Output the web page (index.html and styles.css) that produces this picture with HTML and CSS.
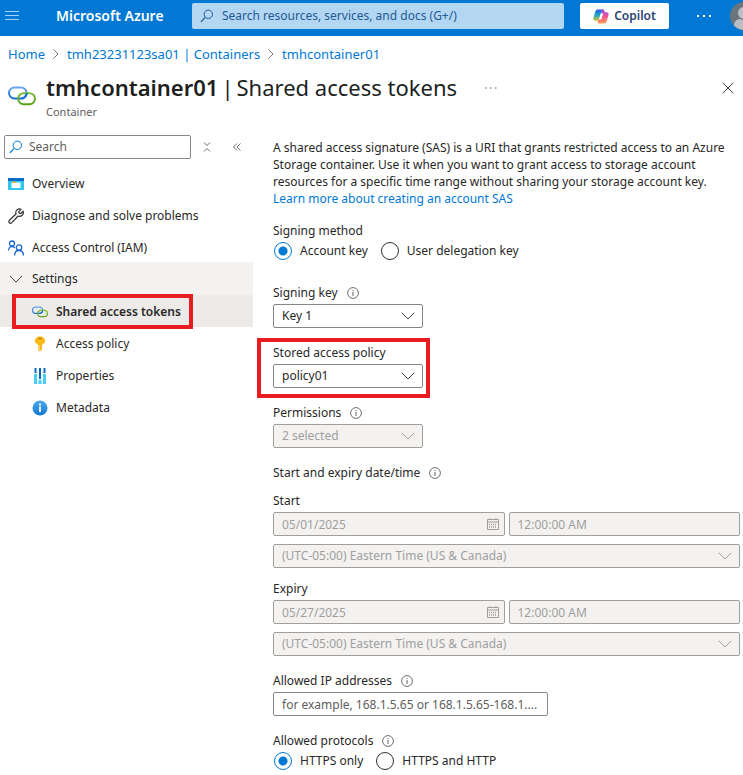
FILE: index.html
```html
<!DOCTYPE html>
<html lang="en">
<head>
<meta charset="utf-8">
<title>tmhcontainer01 | Shared access tokens</title>
<link rel="stylesheet" href="styles.css">
</head>
<body>
<svg class="defs" aria-hidden="true">
  <defs>
    <linearGradient id="g-blue" x1="0" y1="0" x2="0" y2="1"><stop offset="0" stop-color="#6aa5f3"/><stop offset="1" stop-color="#0f6fd0"/></linearGradient>
    <linearGradient id="g-green" x1="0" y1="0" x2="0" y2="1"><stop offset="0" stop-color="#7fbf3a"/><stop offset="1" stop-color="#5a9e17"/></linearGradient>
    <linearGradient id="g-info" x1="0" y1="0" x2="0" y2="1"><stop offset="0" stop-color="#4aa8ec"/><stop offset="1" stop-color="#1277cf"/></linearGradient>
    <linearGradient id="g-cool" x1="0" y1="0" x2="0" y2="1"><stop offset="0" stop-color="#1b62e0"/><stop offset=".5" stop-color="#1ba6c9"/><stop offset="1" stop-color="#d9c62c"/></linearGradient>
    <linearGradient id="g-warm" x1="0" y1="0" x2="0" y2="1"><stop offset="0" stop-color="#9a50e8"/><stop offset=".5" stop-color="#f0568f"/><stop offset="1" stop-color="#ff9a4d"/></linearGradient>
  </defs>
  <symbol id="link" viewBox="0 0 28 20">
    <rect x="1" y="1.500" width="17.600" height="11" rx="5.500" fill="none" stroke="url(#g-blue)" stroke-width="2"/>
    <rect x="10.200" y="7.200" width="16.800" height="11" rx="5.500" fill="none" stroke="url(#g-green)" stroke-width="2"/>
    <path d="M13 12.500a5.500 5.500 0 0 0 5.600-5.500" fill="none" stroke="#1873d3" stroke-width="2"/>
  </symbol>
  <symbol id="lens" viewBox="0 0 14 14">
    <circle cx="8.3" cy="5.3" r="4.2" fill="none" stroke="currentColor"/>
    <path d="M5.2 8.4 1 12.8" stroke="currentColor" stroke-width="1.2"/>
  </symbol>
  <symbol id="chevron" viewBox="0 0 14 8">
    <path d="m.8.8 6.2 6.2L13.200.8" fill="none" stroke="currentColor"/>
  </symbol>
  <symbol id="info" viewBox="0 0 12 12">
    <circle cx="6" cy="6" r="5.400" fill="none" stroke="currentColor" stroke-width=".9"/>
    <path d="M6 5v4M6 3v1.100" stroke="currentColor"/>
  </symbol>
  <symbol id="calendar" viewBox="0 0 12 12">
    <path d="M.5 1.500h11v10H.5zM.5 4h11M3 0v2M9 0v2" fill="none" stroke="currentColor"/>
    <path d="M2 6.500h8M2 9h7" stroke="currentColor" stroke-width="1.500" stroke-dasharray="1 1"/>
  </symbol>
</svg>

<header class="topbar">
  <div class="topbar-start">
    <button class="icon-button" type="button" aria-label="Show portal menu">
      <svg width="14" height="10" viewBox="0 0 14 10"><path d="M0 .5h14M0 4.500h14M0 8.500h14" stroke="#a8d0f2"/></svg>
    </button>
    <a class="brand" href="#">Microsoft Azure</a>
  </div>
  <div class="global-search">
    <svg width="14" height="14"><use href="#lens"/></svg>
    <input type="search" aria-label="Search resources, services, and docs" placeholder="Search resources, services, and docs (G+/)">
  </div>
  <button class="copilot" type="button">
    <svg width="16" height="15" viewBox="0 0 16 15">
      <path d="M5 .5h4.500c1.200 0 1.500.5 1.800 1.500L11.600 3H9.500c-1 0-1.400.6-1.700 1.500L6 10.300C5.700 11.200 5.200 11.700 4 11.700H2.200C.6 11.700 0 10.500.4 9l1.800-6C2.700 1.300 3.500.5 5 .5z" fill="url(#g-cool)"/>
      <path d="M9.500.5c1.200 0 1.500.5 1.800 1.500l.4 1.300h1.800c1.600 0 2.400 1.200 2 2.700l-1.800 6c-.5 1.700-1.300 2.500-2.800 2.500H6.500c-1.200 0-1.500-.5-1.800-1.500L4.400 11.700c1.100-.1 1.400-.7 1.700-1.500h2.100L10 4.700 8 4c.4-1.500 0-3.500 1.500-3.500z" fill="url(#g-warm)"/>
      <path d="M7.800 4.800h2.200L8.200 10.200H6.100z" fill="#fff"/>
    </svg>
    Copilot
  </button>
  <button class="icon-button more" type="button" aria-label="More">
    <svg width="14" height="2"><path d="M0 1h2M6 1h2M12 1h2" stroke="#fff" stroke-width="2"/></svg>
  </button>
  <svg class="avatar" width="28" height="28" viewBox="0 0 28 28"><circle cx="14" cy="14" r="14" fill="#6b757d"/><circle cx="14" cy="11" r="6" fill="#b9bfc4"/><path d="M4 23.500c0-4 3-6.500 6-6.500 2 1.300 6 1.300 8 0 3 0 6 2.500 6 6.500A14 14 0 0 1 14 28a14 14 0 0 1-10-4.500z" fill="#b9bfc4"/></svg>
</header>

<nav class="breadcrumb" aria-label="Breadcrumb">
  <a href="#">Home</a>
  <svg width="6" height="10" viewBox="0 0 6 10"><path d="m.5.5 4.500 4.500L.5 9.500" fill="none" stroke="#797775"/></svg>
  <a href="#">tmh23231123sa01 | Containers</a>
  <svg width="6" height="10" viewBox="0 0 6 10"><path d="m.5.5 4.500 4.500L.5 9.500" fill="none" stroke="#797775"/></svg>
  <a href="#">tmhcontainer01</a>
</nav>

<div class="page-head">
  <svg width="28" height="20"><use href="#link"/></svg>
  <div class="page-title">
    <h1><b>tmhcontainer01</b> <span>|</span> <span>Shared access tokens</span></h1>
    <p>Container</p>
  </div>
  <button class="icon-button title-more" type="button" aria-label="More options">
    <svg width="12" height="2"><path d="M0 1h1.500M5 1h1.500M10 1h1.500" stroke="#605e5c"/></svg>
  </button>
  <button class="icon-button close" type="button" aria-label="Close">
    <svg width="12" height="12"><path d="m.5.5 11 11m0-11-11 11" stroke="#484644"/></svg>
  </button>
</div>

<div class="body">
  <aside class="sidebar">
    <div class="menu-tools">
      <div class="menu-search">
        <svg width="14" height="14"><use href="#lens"/></svg>
        <input type="search" aria-label="Search menu" placeholder="Search">
      </div>
      <button class="icon-button" type="button" aria-label="Collapse groups"><svg width="8" height="10" viewBox="0 0 8 10"><path d="m1 .5 3 3 3-3M1 9.500l3-3 3 3" fill="none" stroke="#605e5c" stroke-width=".9"/></svg></button>
      <button class="icon-button" type="button" aria-label="Collapse menu"><svg width="8" height="8" viewBox="0 0 8 8"><path d="M4 .5.500 4 4 7.500M7.500.5 4 4l3.500 3.500" fill="none" stroke="#605e5c" stroke-width=".9"/></svg></button>
    </div>
    <ul class="menu">
      <li><a href="#">
        <svg width="16" height="16" viewBox="0 0 16 16"><path d="M0 2h16v12H0z" fill="#32c8ee"/><path d="M0 2h16v3H0z" fill="#0b6dc7"/><path d="M3.500 6.500h9V12h-9z" fill="#fff"/><path d="M4 5.500h4v1.400H4z" fill="#f7a53b"/></svg>
        Overview</a></li>
      <li><a href="#">
        <svg width="16" height="16" viewBox="0 0 16 16"><path d="M13.200 1.200 10.800 3.600l.3 1.600 1.700.3 2.300-2.400c.9 2.400-.7 5.100-3.400 5.200-.6 0-1.100-.1-1.600-.3l-6.300 6.600c-1.700 1.700-4-.5-2.400-2.300L8 6C6.900 2.700 10 -.2 13.200 1.200z" fill="none" stroke="#323130" stroke-width="1.200" stroke-linejoin="round"/></svg>
        Diagnose and solve problems</a></li>
      <li><a href="#">
        <svg width="16" height="16" viewBox="0 0 16 16" fill="none" stroke="#1a66d0" stroke-width="1.300"><circle cx="4" cy="3.500" r="2.500"/><path d="M.6 10.500c0-2.300 1.500-4 3.400-4 1.200 0 2.200.5 2.800 1.400"/><circle cx="11" cy="7.500" r="2.700"/><path d="M6.600 15.500c0-3 1.900-5 4.400-5s4.400 2 4.400 5"/></svg>
        Access Control (IAM)</a></li>
      <li class="group">
        <button type="button" aria-expanded="true"><svg width="16" height="8" viewBox="-1 0 16 8"><path d="m1 1 6 6 6-6" fill="none" stroke="#484644"/></svg>
        Settings</button>
        <ul>
          <li class="marked"><a class="current" href="#" aria-current="page">
            <svg width="16" height="12"><use href="#link"/></svg>
            Shared access tokens</a></li>
          <li><a href="#">
            <svg width="16" height="16" viewBox="0 0 16 16"><path d="M6 .5h4L13 3.200v3L10 9V13l-2 2.500L6.200 14V9L3 6.200v-3z" fill="#fdb813"/><path d="M6 2.500h4" stroke="#b97b00"/><path d="M7.300 9v5" stroke="#ffdf7c"/></svg>
            Access policy</a></li>
          <li><a href="#">
            <svg width="16" height="16" viewBox="0 0 16 16"><path d="M3.500 0v5M8 0v11M12.500 0v5" stroke="#0b69c7" stroke-width="2"/><path d="M3.500 6v10M8 12v4M12.500 6v10" stroke="#42d1f5" stroke-width="3"/></svg>
            Properties</a></li>
          <li><a href="#">
            <svg width="16" height="16" viewBox="0 0 16 16"><circle cx="8" cy="8" r="7.500" fill="url(#g-info)"/><path d="M8 6.500V12M8 3.500v2" stroke="#fff" stroke-width="1.800"/></svg>
            Metadata</a></li>
        </ul>
      </li>
    </ul>
  </aside>

  <main class="content">
    <p class="intro">A shared access signature (SAS) is a URI that grants restricted access to an Azure Storage container. Use it when you want to grant access to storage account resources for a specific time range without sharing your storage account key.<br><a href="#">Learn more about creating an account SAS</a></p>

    <form class="form">
      <fieldset class="field radios-field">
        <legend class="label">Signing method</legend>
        <div class="radios">
          <label><input type="radio" name="method" checked>Account key</label>
          <label><input type="radio" name="method">User delegation key</label>
        </div>
      </fieldset>

      <div class="field">
        <div class="label"><label for="key">Signing key</label><svg width="12" height="12"><use href="#info"/></svg></div>
        <div class="select short"><select id="key"><option>Key 1</option><option>Key 2</option></select><svg width="14" height="8"><use href="#chevron"/></svg></div>
      </div>

      <div class="field">
        <div class="highlight">
          <div class="label"><label for="policy">Stored access policy</label></div>
          <div class="select short"><select id="policy"><option>policy01</option></select><svg width="14" height="8"><use href="#chevron"/></svg></div>
        </div>
      </div>

      <div class="field">
        <div class="label"><label for="perm">Permissions</label><svg width="12" height="12"><use href="#info"/></svg></div>
        <div class="select short"><select id="perm" disabled><option>2 selected</option></select><svg width="14" height="8"><use href="#chevron"/></svg></div>
      </div>

      <fieldset class="field dates">
        <legend class="label">Start and expiry date/time<svg width="12" height="12"><use href="#info"/></svg></legend>
        <div class="date">
          <div class="label"><label for="start">Start</label></div>
          <div class="date-row">
            <div class="date-box"><input id="start" type="text" value="05/01/2025" disabled><svg width="12" height="12"><use href="#calendar"/></svg></div>
            <input type="text" aria-label="Start time" value="12:00:00 AM" disabled>
          </div>
          <div class="select"><select aria-label="Start time zone" disabled><option>(UTC-05:00) Eastern Time (US &amp; Canada)</option></select><svg width="14" height="8"><use href="#chevron"/></svg></div>
        </div>
        <div class="date">
          <div class="label"><label for="expiry">Expiry</label></div>
          <div class="date-row">
            <div class="date-box"><input id="expiry" type="text" value="05/27/2025" disabled><svg width="12" height="12"><use href="#calendar"/></svg></div>
            <input type="text" aria-label="Expiry time" value="12:00:00 AM" disabled>
          </div>
          <div class="select"><select aria-label="Expiry time zone" disabled><option>(UTC-05:00) Eastern Time (US &amp; Canada)</option></select><svg width="14" height="8"><use href="#chevron"/></svg></div>
        </div>
      </fieldset>

      <div class="field">
        <div class="label"><label for="ip">Allowed IP addresses</label><svg width="12" height="12"><use href="#info"/></svg></div>
        <input class="ip" id="ip" type="text" placeholder="for example, 168.1.5.65 or 168.1.5.65-168.1....">
      </div>

      <fieldset class="field">
        <legend class="label">Allowed protocols<svg width="12" height="12"><use href="#info"/></svg></legend>
        <div class="radios">
          <label><input type="radio" name="protocol" checked>HTTPS only</label>
          <label><input type="radio" name="protocol">HTTPS and HTTP</label>
        </div>
      </fieldset>
    </form>
  </main>
</div>
</body>
</html>
```
FILE: styles.css
```css
* { box-sizing: border-box; }

body {
  margin: 0;
  background: #fff;
  color: #292827;
  font: 12px/16px "Noto Sans", "Open Sans", sans-serif;
}

a { color: #0078d4; text-decoration: none; }
svg { flex: none; display: block; }
ul { list-style: none; margin: 0; padding: 0; }
input, select, button { font: inherit; color: inherit; }
input { min-width: 0; }
.defs { position: absolute; width: 0; height: 0; }

.icon-button {
  flex: none;
  display: flex;
  padding: 0;
  border: 0;
  background: none;
}

/* Top bar */
.topbar {
  display: flex;
  align-items: center;
  height: 36px;
  padding-bottom: 4px;
  background: #0078d4;
  overflow: hidden;
}
.topbar-start {
  flex: none;
  display: flex;
  align-items: center;
  gap: 37px;
  width: 192px;
  padding-left: 5px;
}
.brand { color: #fff; font-size: 14px; font-weight: 600; }
.global-search {
  flex: 1;
  display: flex;
  align-items: center;
  gap: 8px;
  height: 26px;
  padding: 0 8px;
  border-radius: 2px;
  background: #b3d6f2;
  color: #1f5a94;
}
.global-search input, .menu-search input {
  flex: 1;
  padding: 0;
  border: 0;
  outline: 0;
  background: none;
}
.global-search input::placeholder { color: #1f5a94; opacity: 1; }
.copilot {
  flex: none;
  display: flex;
  align-items: center;
  justify-content: center;
  gap: 5px;
  width: 89px;
  height: 26px;
  margin-left: 16px;
  padding: 0;
  border: 0;
  border-radius: 2px;
  background: #fff;
  color: #2b4470;
  font-weight: 600;
}
.more { margin-left: 28px; }
.avatar { margin: 0 -15px 0 19px; }

/* Page heading */
.breadcrumb {
  display: flex;
  align-items: center;
  gap: 8px;
  height: 36px;
  padding: 0 8px;
  font-size: 13px;
}
.page-head {
  display: flex;
  align-items: flex-start;
  padding: 0 8px;
  height: 63px;
}
.page-head > svg { margin-top: 14px; }
.page-title { margin-left: 10px; }
.page-title h1 {
  display: flex;
  gap: 3px;
  margin: 0;
  color: #201f1e;
  font-size: 22px;
  font-weight: 400;
  line-height: 30px;
}
.page-title b { font-weight: 600; }
.page-title p { margin: 2px 0 0; color: #605e5c; font-size: 11px; }
.title-more { margin: 15px 0 0 28px; }
.close { margin: 10px 1px 0 auto; }

/* Layout */
.body { display: flex; align-items: flex-start; }
.sidebar { flex: none; width: 253px; }
.content { flex: 1; min-width: 0; padding: 4px 3px 4px 20px; }

/* Resource menu */
.menu-tools { display: flex; align-items: center; padding-left: 4px; margin-bottom: 8px; }
.menu-search {
  display: flex;
  align-items: center;
  gap: 6px;
  width: 187px;
  height: 24px;
  padding: 0 4px;
  border: 1px solid #8a8886;
  border-radius: 2px;
  color: #0078d4;
}
.menu-search input::placeholder { color: #605e5c; opacity: 1; }
.menu-tools .icon-button { margin-left: 11px; width: 10px; justify-content: center; }
.menu-tools .icon-button + .icon-button { margin-left: 20px; }
.menu a, .menu button {
  display: flex;
  align-items: center;
  gap: 8px;
  width: 100%;
  height: 32px;
  padding: 2px 8px 0;
  border: 0;
  background: none;
  color: #292827;
}
.group { margin-top: -1px; }
.menu button { height: 33px; padding-top: 0; background: #f3f2f1; }
.menu ul a { padding-left: 32px; }
.menu .current { background: #edebe9; font-weight: 600; }
.marked, .highlight { position: relative; }
.marked::after, .highlight::after {
  content: "";
  position: absolute;
  inset: -1px 60px -2px 12px;
  border: 4px solid #e91c1f;
  pointer-events: none;
}
.highlight { width: 150px; }
.highlight::after { inset: -6px -7px -10px -16px; }

/* Form */
.intro { margin: 0 0 15px; line-height: 17px; }
fieldset { margin: 0; padding: 0; border: 0; min-width: 0; }
legend { padding: 0; }
.field { margin-bottom: 16px; }
.radios-field { margin-bottom: 24px; }
.label {
  display: flex;
  align-items: center;
  gap: 9px;
  margin-bottom: 3px;
  padding-top: 1px;
}
.label svg { color: #605e5c; }

.radios { display: flex; gap: 12px; }
.radios label { display: flex; align-items: center; gap: 8px; height: 18px; }
.radios input {
  appearance: none;
  width: 18px;
  height: 18px;
  margin: 0 0 0 1px;
  border: 1px solid #323130;
  border-radius: 50%;
}
.radios input:checked {
  border-color: #0078d4;
  background: radial-gradient(circle, #0078d4 4px, #fff 5px);
}

.select, .date-box { position: relative; }
.short { width: 150px; }
select, input[type="text"] {
  appearance: none;
  display: block;
  width: 100%;
  height: 24px;
  padding: 0 8px;
  border: 1px solid #8a8886;
  border-radius: 2px;
  background: #fff;
}
select:disabled, input[type="text"]:disabled {
  border-color: #a19f9d;
  background: #f3f2f1;
  color: #a19f9d;
  opacity: 1;
}
.select svg, .date-box svg {
  position: absolute;
  right: 8px;
  top: 8px;
  color: #484644;
  pointer-events: none;
}
.date-box svg { top: 6px; right: 6px; }
.select :disabled + svg, .date-box svg { color: #a19f9d; }
.dates > .label { margin-bottom: 11px; }
.date + .date { margin-top: 12px; }
.date-row { display: grid; grid-template-columns: 1fr 1fr; gap: 4px; margin-bottom: 8px; }
input.ip { width: 275px; }
.ip::placeholder { color: #605e5c; opacity: 1; }
```
